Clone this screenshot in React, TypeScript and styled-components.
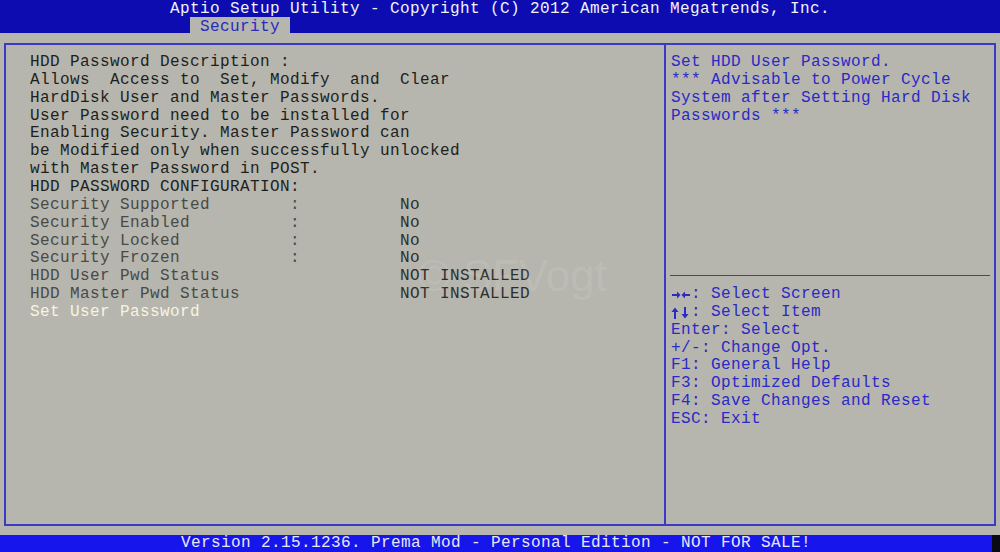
import React from "react";
import styled, { createGlobalStyle } from "styled-components";

const GlobalStyle = createGlobalStyle`
  html, body {
    margin: 0;
    padding: 0;
    background: #b6b6ae;
  }
  body {
    font-family: "Liberation Mono", "DejaVu Sans Mono", monospace;
  }
`;

type ConfigRow = {
  label: string;
  colon: boolean;
  value: string;
};

const description = [
  "HDD Password Description :",
  "Allows  Access to  Set, Modify  and  Clear",
  "HardDisk User and Master Passwords.",
  "User Password need to be installed for",
  "Enabling Security. Master Password can",
  "be Modified only when successfully unlocked",
  "with Master Password in POST.",
  "HDD PASSWORD CONFIGURATION:",
];

const configRows: ConfigRow[] = [
  { label: "Security Supported", colon: true, value: "No" },
  { label: "Security Enabled", colon: true, value: "No" },
  { label: "Security Locked", colon: true, value: "No" },
  { label: "Security Frozen", colon: true, value: "No" },
  { label: "HDD User Pwd Status", colon: false, value: "NOT INSTALLED" },
  { label: "HDD Master Pwd Status", colon: false, value: "NOT INSTALLED" },
];

const helpLines = [
  "Set HDD User Password.",
  "*** Advisable to Power Cycle",
  "System after Setting Hard Disk",
  "Passwords ***",
];

type Arrow = "horizontal" | "vertical";

const keyLines: { key: string; text: string; arrows?: Arrow }[] = [
  { key: "→←", text: ": Select Screen", arrows: "horizontal" },
  { key: "↑↓", text: ": Select Item", arrows: "vertical" },
  { key: "Enter", text: ": Select" },
  { key: "+/-", text: ": Change Opt." },
  { key: "F1", text: ": General Help" },
  { key: "F3", text: ": Optimized Defaults" },
  { key: "F4", text: ": Save Changes and Reset" },
  { key: "ESC", text: ": Exit" },
];

function ArrowGlyphs({ kind }: { kind: Arrow }) {
  // BIOS font arrows, two cells wide
  return (
    <ArrowIcon width="20" height="12" viewBox="0 0 20 12" aria-label={kind === "horizontal" ? "→←" : "↑↓"}>
      {kind === "horizontal" ? (
        <g fill="currentColor">
          <rect x="1" y="5" width="6" height="2" />
          <path d="M6 2.5 L9.5 6 L6 9.5 Z" />
          <rect x="13" y="5" width="6" height="2" />
          <path d="M14 2.5 L10.5 6 L14 9.5 Z" />
        </g>
      ) : (
        <g fill="currentColor">
          <rect x="3" y="4" width="2" height="8" />
          <path d="M0.5 5 L4 0.5 L7.5 5 Z" />
          <rect x="13" y="0" width="2" height="8" />
          <path d="M10.5 7 L14 11.5 L17.5 7 Z" />
        </g>
      )}
    </ArrowIcon>
  );
}

function App() {
  return (
    <Screen>
      <GlobalStyle />
      <Header>
        <Title>Aptio Setup Utility - Copyright (C) 2012 American Megatrends, Inc.</Title>
        <TabRow>
          <Tab>Security</Tab>
        </TabRow>
      </Header>

      <Main>
        <Frame>
          <LeftPanel>
            {description.map((line) => (
              <Line key={line}>{line}</Line>
            ))}
            {configRows.map((row) => (
              <ConfigGrid key={row.label}>
                <Label>{row.label}</Label>
                <Label>{row.colon ? ":" : ""}</Label>
                <Value>{row.value}</Value>
              </ConfigGrid>
            ))}
            <Line $selected>Set User Password</Line>
          </LeftPanel>

          <RightPanel>
            <HelpSection>
              {helpLines.map((line) => (
                <HelpLine key={line}>{line}</HelpLine>
              ))}
            </HelpSection>
            <Separator />
            <KeySection>
              {keyLines.map((k) => (
                <HelpLine key={k.key}>
                  {k.arrows ? <ArrowGlyphs kind={k.arrows} /> : k.key}
                  {k.text}
                </HelpLine>
              ))}
            </KeySection>
          </RightPanel>
        </Frame>
        <Watermark>© SFVogt</Watermark>
      </Main>

      <Footer>
        <FooterBar>Version 2.15.1236. Prema Mod - Personal Edition - NOT FOR SALE!</FooterBar>
        <FooterEdge />
      </Footer>
    </Screen>
  );
}

export default App;

const Screen = styled.div`
  width: 1000px;
  height: 552px;
  display: flex;
  flex-direction: column;
  overflow: hidden;
  font-size: 16px;
  letter-spacing: 0.4px;
`;

const Header = styled.header`
  background-color: #0c0cb0;
  height: 33px;
  display: flex;
  flex-direction: column;
`;

const Title = styled.div`
  height: 17px;
  padding-top: 1px;
  box-sizing: border-box;
  line-height: 16px;
  text-align: center;
  color: #f2f2f6;
  white-space: pre;
`;

const TabRow = styled.div`
  flex: 1;
  display: flex;
  padding-left: 190px;
`;

const Tab = styled.div`
  width: 100px;
  background-color: #b6b6ae;
  color: #2a2ac0;
  text-align: center;
  padding-top: 2px;
  box-sizing: border-box;
  line-height: 16px;
`;

const Main = styled.main`
  flex: 1;
  position: relative;
  padding: 10px 4px 9px 4px;
  display: flex;
`;

const Frame = styled.div`
  flex: 1;
  display: flex;
  border: 2px solid #3a3ac4;
`;

const LeftPanel = styled.section`
  width: 634px;
  padding: 9px 0 0 24px;
  border-right: 2px solid #3a3ac4;
`;

const Line = styled.div<{ $selected?: boolean }>`
  height: 17.86px;
  line-height: 17.86px;
  white-space: pre;
  color: ${(p) => (p.$selected ? "#f6f4e2" : "#1e1e1c")};
`;

const ConfigGrid = styled.div`
  display: grid;
  grid-template-columns: 260px 110px auto;
  height: 17.86px;
  line-height: 17.86px;
  white-space: pre;
`;

const Label = styled.span`
  color: #4a4a46;
`;

const Value = styled.span`
  color: #2e2e2c;
`;

const RightPanel = styled.section`
  flex: 1;
  display: flex;
  flex-direction: column;
  padding: 0 4px 0 5px;
`;

const HelpSection = styled.div`
  height: 221px;
  padding-top: 9px;
`;

const Separator = styled.div`
  height: 1px;
  background-color: #3a3ac4;
  margin: 0 0 0 -1px;
`;

const KeySection = styled.div`
  padding-top: 10px;
`;

const HelpLine = styled.div`
  height: 17.86px;
  line-height: 17.86px;
  white-space: pre;
  color: #2a2ac4;
  display: flex;
  align-items: center;
`;

const ArrowIcon = styled.svg`
  display: block;
  flex-shrink: 0;
  margin-top: 1px;
`;

const Watermark = styled.div`
  position: absolute;
  left: 418px;
  top: 218px;
  font-family: "Liberation Sans", Arial, sans-serif;
  font-size: 44px;
  letter-spacing: 0;
  color: rgba(255, 255, 255, 0.1);
  pointer-events: none;
`;

const Footer = styled.footer`
  height: 17px;
  display: flex;
`;

const FooterBar = styled.div`
  flex: 1;
  background-color: #1616ec;
  color: #e8e8f4;
  text-align: center;
  line-height: 17px;
  white-space: pre;
`;

const FooterEdge = styled.div`
  width: 8px;
  background-color: #0a0a14;
`;
